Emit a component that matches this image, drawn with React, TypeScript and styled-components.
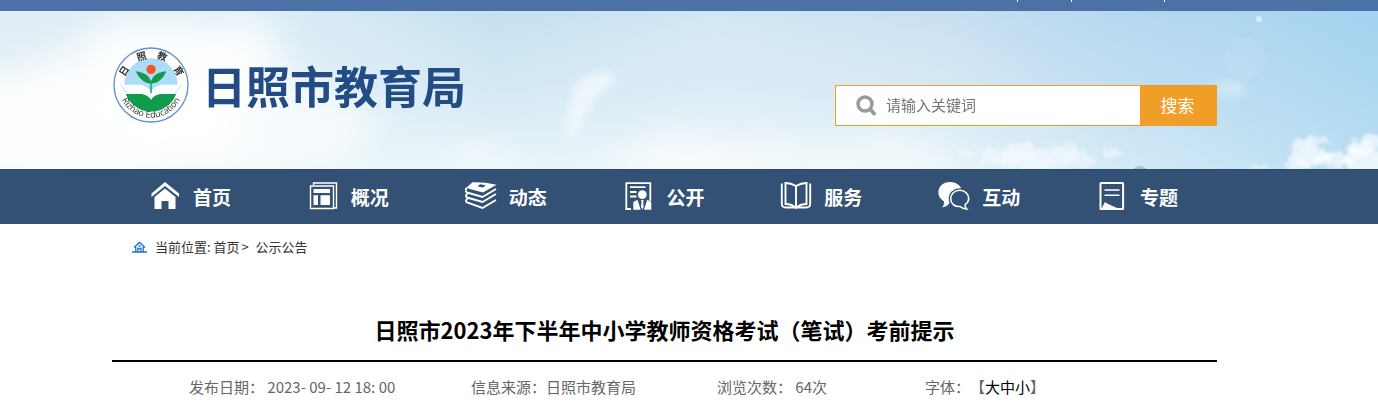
import React from "react";
import styled, { createGlobalStyle } from "styled-components";

const GlobalStyle = createGlobalStyle`
  *, *::before, *::after { box-sizing: border-box; }
  body {
    margin: 0;
    background: #fff;
    color: #333;
    font-family: "Noto Sans CJK SC", "Noto Sans", sans-serif;
    text-spacing-trim: space-all;
  }
  a { color: inherit; text-decoration: none; }
`;

const Inner = styled.div`
  padding: 0 161px 0 112px;
`;

const TopBar = styled.div`
  display: flex;
  justify-content: flex-end;
  height: 11px;
  padding-right: 213px;
  background: #4c71a6;
`;

const Tick = styled.span<{ $gap: number }>`
  width: 1px;
  height: 2px;
  margin-left: ${(p) => p.$gap}px;
  background: #fff;
`;

const Header = styled.header`
  display: grid;
  height: 158px;
  overflow: hidden;
  > * { grid-area: 1 / 1; min-width: 0; }
`;

const SkySvg = styled.svg`
  display: block;
  width: 100%;
  height: 158px;
`;

const HeaderRow = styled(Inner)`
  z-index: 1;
  display: flex;
  justify-content: space-between;
  align-items: flex-start;
`;

const Brand = styled.a`
  display: flex;
  align-items: center;
  gap: 13px;
  padding: 36px 0 0 1px;
`;

const BrandName = styled.span`
  color: #234c84;
  font-size: 44px;
  font-weight: 700;
  line-height: 76px;
`;

const SearchForm = styled.form`
  display: flex;
  width: 382px;
  height: 41px;
  margin-top: 74px;
`;

const SearchField = styled.label`
  display: flex;
  flex: 1;
  align-items: center;
  gap: 10px;
  padding-left: 19px;
  border: 1px solid #f09e27;
  border-right: 0;
  background: #fff;
`;

const SearchInput = styled.input`
  flex: 1;
  min-width: 0;
  padding: 0 0 2px;
  border: 0;
  outline: 0;
  background: transparent;
  color: #333;
  font: inherit;
  font-size: 15px;
  &::placeholder { color: #757575; opacity: 1; }
`;

const SearchButton = styled.button`
  width: 77px;
  padding: 0 2px 2px 0;
  border: 0;
  background: #f09e27;
  color: #fff;
  font: inherit;
  font-size: 17px;
`;

const NavBar = styled.nav`
  height: 55px;
  border-top: 1px solid #2a4b74;
  background: #335175;
`;

const NavList = styled(Inner)`
  display: grid;
  grid-template-columns: repeat(7, 1fr);
`;

const NavLink = styled.a`
  display: flex;
  justify-content: center;
  align-items: center;
  gap: 12px;
  height: 54px;
  padding-right: 2px;
  color: #fff;
  font-size: 19px;
  font-weight: 700;
  line-height: 28px;
`;

const NavIcon = styled.svg`
  width: 32px;
  height: 32px;
  margin-bottom: 2px;
  flex: none;
`;

const Crumbs = styled.nav`
  display: flex;
  align-items: center;
  height: 46px;
  padding-left: 20px;
  font-size: 13px;
  line-height: 20px;
  white-space: pre;
`;

const CrumbIcon = styled.svg`
  width: 15px;
  height: 12px;
  margin-right: 8px;
`;

const CrumbSeparator = styled.span`
  padding: 0 1px 0 2px;
`;

const Title = styled.h1`
  margin: 0;
  padding: 43px 0 14px;
  border-bottom: 2px solid #000;
  color: #000;
  font-size: 22px;
  font-weight: 700;
  line-height: 33px;
  text-align: center;
`;

const Meta = styled.div`
  display: grid;
  grid-template-columns: 282fr 246fr 208fr 292fr;
  padding: 13px 0 13px 77px;
  color: #666;
  font-size: 15px;
  line-height: 24px;
  white-space: pre;
`;

const SizeButton = styled.button`
  padding: 0;
  border: 0;
  background: none;
  color: #000;
  font: inherit;
`;

type Puff = [number, number, number, number, number];

const softClouds: Puff[] = [
  [190, 58, 95, 48, 0.8],
  [100, 85, 120, 45, 0.6],
  [60, 120, 190, 60, 0.8],
  [250, 115, 130, 45, 0.6],
  [230, 28, 50, 24, 0.5],
  [150, 30, 60, 26, 0.4],
  [720, 150, 130, 16, 0.7],
  [870, 148, 80, 16, 0.5],
  [480, 152, 50, 10, 0.5],
];

const sharpClouds: Puff[] = [
  [967, 143, 9, 4, 0.4],
  [995, 146, 13, 9, 0.4],
  [1020, 140, 16, 8, 0.45],
  [1035, 150, 35, 10, 0.45],
  [1064, 140, 14, 7, 0.45],
  [1080, 149, 15, 9, 0.4],
  [1114, 143, 11, 4, 0.45],
  [1304, 133, 12, 6, 0.6],
  [1316, 130, 13, 5, 0.5],
  [1310, 146, 20, 10, 0.65],
  [1332, 149, 20, 8, 0.6],
  [1298, 155, 14, 6, 0.6],
  [1360, 136, 12, 9, 0.65],
  [1374, 130, 14, 6, 0.65],
  [1366, 150, 24, 13, 0.7],
  [1258, 157, 8, 3, 0.5],
];

const Puffs = ({ items }: { items: Puff[] }) => (
  <>
    {items.map(([cx, cy, rx, ry, o], i) => (
      <ellipse key={i} cx={cx} cy={cy} rx={rx} ry={ry} opacity={o} />
    ))}
  </>
);

const Sky = () => (
  <SkySvg viewBox="0 0 1378 158" preserveAspectRatio="xMidYMid slice" aria-hidden="true">
    <defs>
      <linearGradient id="across">
        <stop offset="0" stopColor="#dfedf5" />
        <stop offset="0.18" stopColor="#dfeef6" />
        <stop offset="0.36" stopColor="#c4e0f0" />
        <stop offset="0.52" stopColor="#d2e6f4" />
        <stop offset="0.7" stopColor="#c7dff1" />
        <stop offset="0.85" stopColor="#afd2ee" />
        <stop offset="1" stopColor="#98cbee" />
      </linearGradient>
      <linearGradient id="haze" x2="0" y2="1">
        <stop offset="0" stopColor="#fff" stopOpacity="0" />
        <stop offset="0.45" stopColor="#f4fafc" stopOpacity="0.3" />
        <stop offset="1" stopColor="#f1f9fb" stopOpacity="0.82" />
      </linearGradient>
      <linearGradient id="clear">
        <stop offset="0.68" stopColor="#b9dcf1" stopOpacity="0" />
        <stop offset="0.88" stopColor="#b5dbf1" stopOpacity="0.55" />
        <stop offset="1" stopColor="#a8d6f0" stopOpacity="0.7" />
      </linearGradient>
      <filter id="soft" x="-30%" y="-50%" width="160%" height="200%">
        <feTurbulence type="fractalNoise" baseFrequency="0.02" numOctaves="3" seed="4" />
        <feDisplacementMap in="SourceGraphic" scale="40" result="d" />
        <feGaussianBlur in="d" stdDeviation="16" />
      </filter>
      <filter id="fluffy" x="-10%" y="-30%" width="120%" height="160%">
        <feTurbulence type="fractalNoise" baseFrequency="0.14" numOctaves="3" seed="8" />
        <feDisplacementMap in="SourceGraphic" scale="14" xChannelSelector="R" yChannelSelector="G" result="d" />
        <feGaussianBlur in="d" stdDeviation="1.4" />
      </filter>
      <filter id="wisp" x="-50%" y="-50%" width="200%" height="200%">
        <feGaussianBlur stdDeviation="5" />
      </filter>
    </defs>
    <rect width="1378" height="158" fill="url(#across)" />
    <rect width="1378" height="158" fill="url(#haze)" />
    <rect width="1378" height="158" fill="url(#clear)" />
    <g fill="#fff" filter="url(#soft)">
      <Puffs items={softClouds} />
    </g>
    <g fill="#fff" filter="url(#wisp)">
      <path d="M572 88C572 70 590 60 610 60Q622 66 609 76Q596 84 588 100L572 130Q562 120 572 88Z" opacity="0.55" />
      <ellipse cx="1230" cy="78" rx="16" ry="8" opacity="0.35" />
    </g>
    <circle cx="1259" cy="8" r="3" fill="#fff" opacity="0.5" />
    <circle cx="1245" cy="47" r="21" fill="#fff" opacity="0.07" />
    <g fill="#fff" filter="url(#fluffy)">
      <Puffs items={sharpClouds} />
    </g>
    <ellipse cx="1140" cy="158" rx="6" ry="3" fill="#9fb2bd" opacity="0.7" />
  </SkySvg>
);

const Emblem = () => (
  <svg width="76" height="76" viewBox="0 0 228 228" aria-hidden="true">
    <defs>
      <path id="arc" d="M20 142A98 98 0 0 0 208 142" />
      <clipPath id="disc"><circle cx="114" cy="114" r="80" /></clipPath>
    </defs>
    <circle cx="114" cy="114" r="111" fill="#fff" stroke="#5c93cc" strokeWidth="4" />
    <g clipPath="url(#disc)">
      <rect x="30" y="30" width="168" height="86" fill="#acdcf8" />
      <rect x="30" y="116" width="168" height="80" fill="#fff" />
      <path d="M34 141H88Q106 144 114 158Q122 144 140 141H194V194H34Z" fill="#0f9c4b" />
    </g>
    <path d="M23 113L44 141M205 113L184 141" stroke="#5c93cc" strokeWidth="2" />
    <path d="M23 113H85Q107 117 114 139Q121 117 143 113H205L184 141H140Q122 144 114 158Q106 144 88 141H44Z" fill="#fff" />
    <path d="M84 113Q106 117 113 136Q121 117 144 113Z" fill="#acdcf8" />
    <path d="M114 139V100" stroke="#0f9c4b" strokeWidth="4" />
    <path d="M114 110C94 110 78 94 68 73C96 77 113 87 114 110Z" fill="#0f9c4b" />
    <path d="M114 110C115 87 133 76 160 73C150 96 134 110 114 110Z" fill="#0f9c4b" />
    <circle cx="114" cy="67" r="14" fill="#f2581f" />
    <g fill="#332f2f" fontSize="29" fontWeight="700" textAnchor="middle">
      <text transform="translate(42 77) rotate(-58)">日</text>
      <text transform="translate(88 38) rotate(-15)">照</text>
      <text transform="translate(144 38) rotate(20)">教</text>
      <text transform="translate(188 77) rotate(60)">育</text>
    </g>
    <text fill="#333" fontFamily="Open Sans, sans-serif" fontSize="27" textAnchor="middle">
      <textPath href="#arc" startOffset="50%">Rizhao Education</textPath>
    </text>
  </svg>
);

const navItems: { label: string; icon: React.ReactNode }[] = [
  {
    label: "首页",
    icon: (
      <g fill="#fff">
        <path d="M16 2L30 13.5V17L16 6L2.500 17V13.500Z" />
        <path d="M16 8.500L26.500 17V29H19.500V21H12.500V29H5.500V17Z" />
      </g>
    ),
  },
  {
    label: "概况",
    icon: (
      <>
        <path d="M6.500 5V3H29.500V28H26.500M3.500 6H26.500V28.500H3.500Z" fill="none" stroke="#fff" strokeWidth="1.400" />
        <path d="M6.500 9H23V13H6.500ZM6.500 15.300H11V25H6.500ZM13.500 15.300H23V25H13.500Z" fill="#fff" />
      </>
    ),
  },
  {
    label: "动态",
    icon: (
      <>
        <path
          d="M7.500 2.300Q19 2 31.500 4.700L18 12.600L1 8Z M15 4.300L12.500 6.400L18 7.400L20.800 5.200Z"
          fill="#fff"
          fillRule="evenodd"
        />
        <path
          d="M1.500 8Q-.5 11 2 12.500L17.500 17L31 9M3 13Q-.5 16 2 17.500L17.500 22L31 14M3 18Q-.5 21 2 22.500L17.500 28L31 20"
          fill="none"
          stroke="#fff"
          strokeWidth="1.900"
        />
      </>
    ),
  },
  {
    label: "公开",
    icon: (
      <>
        <path d="M9 29H4.300V3.200H28.300V21M8 7.200H23.500M8 12H14.500M8 16.500H14.500" fill="none" stroke="#fff" strokeWidth="1.800" />
        <circle cx="20.300" cy="14.600" r="4.400" fill="#fff" />
        <path d="M11.300 29.700V22L15.500 19.800L18.700 29.700ZM29.300 29.700V22L25.200 19.800L22 29.700ZM19 20H21.700L21.200 22L21.600 27L20.300 29.500L19 27L19.500 22Z" fill="#fff" />
      </>
    ),
  },
  {
    label: "服务",
    icon: (
      <path
        d="M16 6Q11 3 5.500 3V24Q12 24 16 28Q20 24 26.500 24V3Q21 3 16 6V28M1.800 3.500V24Q2 27.500 6 27.500H26Q30 27.500 30.200 24V3.500"
        fill="none"
        stroke="#fff"
        strokeWidth="1.900"
      />
    ),
  },
  {
    label: "互动",
    icon: (
      <>
        <path d="M12 2C5 2 .4 6.500 .4 12.300C.4 16 2.500 19.500 6 21.200Q6.300 25 4.300 27.500Q9.500 26.500 11.500 23C18 23 24 18.500 24 12.300C24 6.500 19 2 12 2Z" fill="#fff" />
        <path
          d="M21.700 10.300C16.500 10.300 12.700 14 12.700 18.700C12.700 23.400 16.500 27 22 26.500Q24.500 28.800 28.700 29Q26.800 27 27.200 24.500C29.500 23 30.700 21 30.700 18.700C30.700 14 27 10.300 21.700 10.300Z"
          fill="#335175"
          stroke="#335175"
          strokeWidth="4"
        />
        <path
          d="M21.700 10.300C16.500 10.300 12.700 14 12.700 18.700C12.700 23.400 16.500 27 22 26.500Q24.500 28.800 28.700 29Q26.800 27 27.200 24.500C29.500 23 30.700 21 30.700 18.700C30.700 14 27 10.300 21.700 10.300Z"
          fill="#335175"
          stroke="#fff"
          strokeWidth="1.600"
        />
      </>
    ),
  },
  {
    label: "专题",
    icon: (
      <>
        <rect x="4.500" y="3" width="22.600" height="26" rx="0.500" fill="none" stroke="#fff" strokeWidth="2" />
        <path d="M8.500 10H23.500M8.500 15.300H23.500" stroke="#fff" strokeWidth="1.600" />
        <path d="M5 29.500L9 22L12 24L24.500 29.500Z" fill="#fff" />
      </>
    ),
  },
];

export default function App() {
  return (
    <>
      <GlobalStyle />
      <TopBar>
        <Tick $gap={0} />
        <Tick $gap={53} />
        <Tick $gap={92} />
      </TopBar>
      <Header>
        <Sky />
        <HeaderRow>
          <Brand href="#">
            <Emblem />
            <BrandName>日照市教育局</BrandName>
          </Brand>
          <SearchForm onSubmit={(e) => e.preventDefault()}>
            <SearchField>
              <svg width="21" height="21" viewBox="0 0 21 21" fill="none" stroke="#999" aria-hidden="true">
                <circle cx="10" cy="9" r="7" strokeWidth="3.400" />
                <path d="M15 14L19 18.500" strokeWidth="3.800" strokeLinecap="round" />
              </svg>
              <SearchInput type="text" placeholder="请输入关键词" aria-label="请输入关键词" />
            </SearchField>
            <SearchButton type="submit">搜索</SearchButton>
          </SearchForm>
        </HeaderRow>
      </Header>
      <NavBar>
        <NavList>
          {navItems.map((item) => (
            <NavLink key={item.label} href="#">
              <NavIcon viewBox="0 0 32 32" aria-hidden="true">{item.icon}</NavIcon>
              {item.label}
            </NavLink>
          ))}
        </NavList>
      </NavBar>
      <Inner as="main">
        <Crumbs>
          <CrumbIcon viewBox="0 0 15 12" fill="none" stroke="#1c75c8" strokeWidth="1.300" aria-hidden="true">
            <path d="M0 11H15M2 6.500L7.500 1.500L13 6.500M3.800 6V10.500M11.200 6V10.500M6 10.500V7.500H9V10.500M6.500 5H8.500" />
          </CrumbIcon>
          <span>当前位置: </span>
          <a href="#">首页</a>
          <CrumbSeparator>&gt;  </CrumbSeparator>
          <a href="#">公示公告</a>
        </Crumbs>
        <Title>日照市2023年下半年中小学教师资格考试（笔试）考前提示</Title>
        <Meta>
          <span>发布日期： 2023- 09- 12 18: 00</span>
          <span>信息来源：日照市教育局</span>
          <span>浏览次数： 64次</span>
          <span>
            字体：【<SizeButton type="button">大</SizeButton>
            <SizeButton type="button">中</SizeButton>
            <SizeButton type="button">小</SizeButton>】
          </span>
        </Meta>
      </Inner>
    </>
  );
}
